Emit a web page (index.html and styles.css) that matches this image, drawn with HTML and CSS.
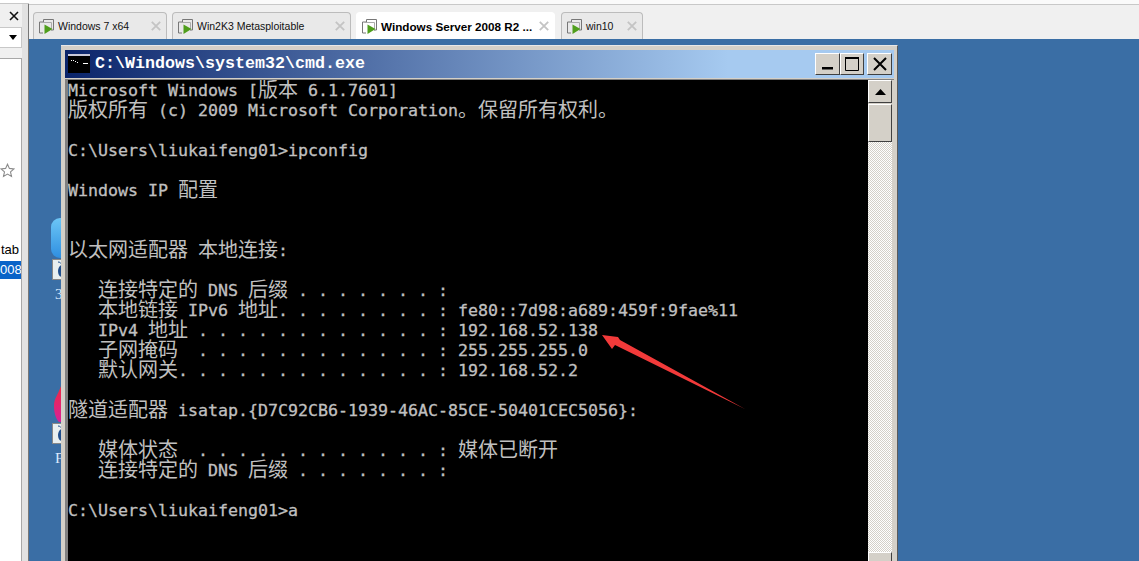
FILE: index.html
```html
<!DOCTYPE html>
<html lang="zh">
<head>
<meta charset="utf-8">
<title>cmd.exe</title>
<link rel="stylesheet" href="styles.css">
</head>
<body>
<div class="app">
  <aside class="side">
    <div class="side-top"></div>
    <div class="side-close"><svg width="10" height="10" viewBox="0 0 10 10"><path d="M1 1l8 8M9 1l-8 8" stroke="#111" stroke-width="1.6" fill="none"/></svg></div>
    <div class="side-select"><svg width="10" height="6" viewBox="0 0 10 6"><path d="M1 0h8L5 5z" fill="#000"/></svg></div>
    <div class="side-list">
      <svg class="star" width="15" height="15" viewBox="0 0 15 15"><path d="M7.500 1.200l1.900 4.200 4.500.5-3.400 3 1 4.500-4-2.300-4 2.300 1-4.500-3.400-3 4.500-.5z" fill="none" stroke="#8c8c8c" stroke-width="1.100"/></svg>
      <div class="item">tab</div>
      <div class="item sel">008</div>
    </div>
  </aside>
  <main class="main">
    <div class="tabs">
      <div class="tab t1"><svg class="vm" width="15" height="15" viewBox="0 0 15 15"><path d="M4.500 3V.5h10V11H12M4.500 3H.5v11H4" fill="none" stroke="#777"/><path d="M2.500 3.500h10V12" fill="none" stroke="#aaa"/><path d="M5.500 5.500l8 4.500-8 5z" fill="#4f9e1c"/></svg><span class="label">Windows 7 x64</span><svg class="x" width="10" height="10" viewBox="0 0 10 10"><path d="M.8.8l8.400 8.400M9.200.8L.8 9.200" stroke="#c4c4c4" stroke-width="1.800"/></svg></div>
      <div class="tab t2"><svg class="vm" width="15" height="15" viewBox="0 0 15 15"><path d="M4.500 3V.5h10V11H12M4.500 3H.5v11H4" fill="none" stroke="#777"/><path d="M2.500 3.500h10V12" fill="none" stroke="#aaa"/><path d="M5.500 5.500l8 4.500-8 5z" fill="#4f9e1c"/></svg><span class="label">Win2K3 Metasploitable</span><svg class="x" width="10" height="10" viewBox="0 0 10 10"><path d="M.8.8l8.400 8.400M9.200.8L.8 9.200" stroke="#c4c4c4" stroke-width="1.800"/></svg></div>
      <div class="tab t3 active"><svg class="vm" width="15" height="15" viewBox="0 0 15 15"><path d="M4.500 3V.5h10V11H12M4.500 3H.5v11H4" fill="none" stroke="#777"/><path d="M2.500 3.500h10V12" fill="none" stroke="#aaa"/><path d="M5.500 5.500l8 4.500-8 5z" fill="#4f9e1c"/></svg><span class="label">Windows Server 2008 R2 ...</span><svg class="x" width="10" height="10" viewBox="0 0 10 10"><path d="M.8.8l8.400 8.400M9.200.8L.8 9.200" stroke="#c4c4c4" stroke-width="1.800"/></svg></div>
      <div class="tab t4"><svg class="vm" width="15" height="15" viewBox="0 0 15 15"><path d="M4.500 3V.5h10V11H12M4.500 3H.5v11H4" fill="none" stroke="#777"/><path d="M2.500 3.500h10V12" fill="none" stroke="#aaa"/><path d="M5.500 5.500l8 4.500-8 5z" fill="#4f9e1c"/></svg><span class="label">win10</span><svg class="x" width="10" height="10" viewBox="0 0 10 10"><path d="M.8.8l8.400 8.400M9.200.8L.8 9.200" stroke="#c4c4c4" stroke-width="1.800"/></svg></div>
    </div>
    <div class="desktop">
      <div class="dicon d1"><div class="art art-blue"></div><div class="short"><svg width="9" height="20" viewBox="0 0 9 20"><path d="M9 5C7 5 5 8 5 11c0 4 2 6 4 6z" fill="#1f4e8c"/><path d="M5 2c2 0 3 1 4 3" stroke="#1f4e8c" fill="none"/></svg></div><div class="cap">3</div></div>
      <div class="dicon d2"><div class="art art-red"><svg width="7" height="36" viewBox="0 0 7 36"><defs><linearGradient id="rg" x1="0" y1="0" x2="0" y2="1"><stop offset="0" stop-color="#f02a40"/><stop offset="1" stop-color="#d8209a"/></linearGradient></defs><path d="M7 0V36H5C2 33 0 27 0 20 0 12 4 9 7 0z" fill="url(#rg)"/></svg></div><div class="short"><svg width="9" height="20" viewBox="0 0 9 20"><path d="M9 5C7 5 5 8 5 11c0 4 2 6 4 6z" fill="#1f4e8c"/><path d="M5 2c2 0 3 1 4 3" stroke="#1f4e8c" fill="none"/></svg></div><div class="cap">F</div></div>

      <section class="window">
        <header class="titlebar">
          <span class="cmdicon"><svg width="22" height="19" viewBox="0 0 22 19"><rect width="22" height="19" fill="#000"/><rect width="22" height="2" fill="#c8c8d8"/><path d="M3 6h1v1H3zM5 6h1v1H5zM7 7h1v1H7zM9 8h1v1H9zM15 9h5v1h-5z" fill="#fff"/></svg></span>
          <span class="title">C:\Windows\system32\cmd.exe</span>
          <span class="wbtn b-min"><svg width="11" height="3" viewBox="0 0 11 3"><rect width="11" height="2.500" fill="#000"/></svg></span>
          <span class="wbtn b-max"><svg width="14" height="14" viewBox="0 0 14 14"><path d="M.5 1.500h13v12H.5z" fill="none" stroke="#000"/><path d="M0 1h14" stroke="#000" stroke-width="2"/></svg></span>
          <span class="wbtn b-close"><svg width="14" height="14" viewBox="0 0 14 14"><path d="M1 1l12 12M13 1L1 13" stroke="#000" stroke-width="2" fill="none"/></svg></span>
        </header>
        <div class="client">
          <div class="console">
            <div class="line">Microsoft Windows [<span class="zh">版本</span> 6.1.7601]</div>
            <div class="line"><span class="zh">版权所有</span> (c) 2009 Microsoft Corporation<span class="zh">。保留所有权利。</span></div>
            <div class="line"></div>
            <div class="line">C:\Users\liukaifeng01&gt;ipconfig</div>
            <div class="line"></div>
            <div class="line">Windows IP <span class="zh">配置</span></div>
            <div class="line"></div>
            <div class="line"></div>
            <div class="line"><span class="zh">以太网适配器</span> <span class="zh">本地连接</span>:</div>
            <div class="line"></div>
            <div class="line">   <span class="zh">连接特定的</span> DNS <span class="zh">后缀</span> . . . . . . . :</div>
            <div class="line">   <span class="zh">本地链接</span> IPv6 <span class="zh">地址</span>. . . . . . . . : fe80::7d98:a689:459f:9fae%11</div>
            <div class="line">   IPv4 <span class="zh">地址</span> . . . . . . . . . . . . : 192.168.52.138</div>
            <div class="line">   <span class="zh">子网掩码</span>  . . . . . . . . . . . . : 255.255.255.0</div>
            <div class="line">   <span class="zh">默认网关</span>. . . . . . . . . . . . . : 192.168.52.2</div>
            <div class="line"></div>
            <div class="line"><span class="zh">隧道适配器</span> isatap.{D7C92CB6-1939-46AC-85CE-50401CEC5056}:</div>
            <div class="line"></div>
            <div class="line">   <span class="zh">媒体状态</span>  . . . . . . . . . . . . : <span class="zh">媒体已断开</span></div>
            <div class="line">   <span class="zh">连接特定的</span> DNS <span class="zh">后缀</span> . . . . . . . :</div>
            <div class="line"></div>
            <div class="line">C:\Users\liukaifeng01&gt;a</div>
          </div>
          <div class="scroll">
            <div class="sbtn"><svg width="11" height="6" viewBox="0 0 11 6"><path d="M5.500 0L11 6H0z" fill="#000"/></svg></div>
            <div class="thumb"></div>
            <div class="track"></div>
            <div class="sbtn"></div>
          </div>
        </div>
      </section>

      <svg class="arrow" width="150" height="80" viewBox="0 0 150 80"><path d="M2 1L18 3L20 6L145 75L15 11L12 15z" fill="#f23a3a"/></svg>
    </div>
  </main>
</div>
</body>
</html>
```
FILE: styles.css
```css
* { box-sizing: border-box; }
html, body { margin: 0; padding: 0; height: 100%; overflow: hidden; background: #3a6ea5; }
.app { display: flex; width: 1139px; height: 561px; overflow: hidden; }

/* left host panel */
.side { width: 29px; flex: none; display: flex; flex-direction: column; background: #f0f0f0; border-right: 1px solid #777; padding-right: 6px; box-shadow: inset -6px 0 0 #e2e2e2; }
.side-top { height: 4px; border-bottom: 1px solid #c8c8c8; background: #fff; margin-right: -7px; }
.side-close { height: 23px; display: flex; align-items: center; justify-content: flex-end; padding: 0 3px 0 0; background: #f0f0f0; width: 22px; }
.side-select { height: 21px; width: 22px; background: #fff; border: 1px solid #c8c8c8; border-left: 0; display: flex; align-items: center; justify-content: flex-end; padding-right: 3px; }
.side-list { margin-top: 10px; width: 22px; flex: 1; background: #fff; border: 1px solid #a8a8a8; border-width: 1px 1px 0 0; padding-top: 104px; font: 13px/18px "Liberation Sans", sans-serif; color: #000; }
.star { display: block; margin: 0 0 63px 0; }
.item { text-align: right; padding-right: 2px; height: 18px; overflow: hidden; }
.item.sel { background: #0a64c8; color: #fff; margin-top: 2px; height: 18px; padding-right: 1px; }

/* main */
.main { flex: 1; display: flex; flex-direction: column; min-width: 0; }
.tabs { height: 39px; flex: none; display: flex; align-items: flex-end; background: #f0f0f0; border-top: 4px solid #fafafa; box-shadow: inset 0 1px 0 #c8c8c8; padding-left: 4px; gap: 5px; }
.tab { height: 27px; display: flex; align-items: center; background: #e9e9e9; border: 1px solid #bcbcbc; border-bottom: 0; border-radius: 4px 4px 0 0; padding: 0 5px 0 5px; font: 10.5px "Liberation Sans", sans-serif; color: #111; }
.tab .label { flex: 1; padding-left: 4px; white-space: nowrap; overflow: hidden; }
.tab .vm { flex: none; }
.tab .x { flex: none; }
.t1 { width: 134px; }
.t2 { width: 179px; }
.t3 { width: 199px; margin-right: 1px; }
.t4 { width: 82px; }
.active { background: #fff; border-color: #fff; font-weight: 700; font-size: 11.7px; color: #000; }

/* desktop */
.desktop { flex: 1; position: relative; background: #3a6ea5; }
.dicon { position: absolute; left: 22px; width: 10px; overflow: hidden; font: 15px "Liberation Serif", serif; color: #dbeaff; }
.d1 { top: 179px; }
.d2 { top: 347px; }
.art { height: 40px; line-height: 0; }
.art-blue { width: 20px; background: linear-gradient(#6cc6f6, #2f8fe0); border-radius: 9px 0 0 9px; }
.art-red { height: 36px; margin-left: 3px; }
.short { height: 21px; margin-top: 1px; margin-left: 1px; background: #e8eff0; border: 1px solid #888; border-right: 0; line-height: 0; }
.cap { padding-left: 4px; line-height: 18px; margin-top: 5px; }

/* cmd window */
.window { position: absolute; left: 32px; top: 6px; width: 837px; height: 530px; background: #d4d0c8; border-right: 1px solid #5a5a5a; border-top: 1px solid #e8e8e8; padding: 4px 3px 0 4px; display: flex; flex-direction: column; }
.titlebar { height: 28px; flex: none; display: flex; align-items: center; background: linear-gradient(90deg, #0a246a 0%, #a6caf0 80%, #a6caf0 100%); padding: 0 2px 1px 3px; }
.cmdicon { width: 22px; height: 19px; flex: none; line-height: 0; }
.title { flex: 1; margin-left: 5px; font: 700 16.67px "Liberation Mono", monospace; color: #fff; white-space: pre; }
.wbtn { width: 25px; height: 22px; flex: none; display: flex; align-items: center; justify-content: center; background: #d4d0c8; border: 1px solid; border-color: #fff #404040 #404040 #fff; }
.b-min svg { margin-top: 10px; margin-right: 1px; }
.b-max { width: 24px; }
.b-close { margin-left: 3px; }

.client { flex: 1; display: flex; margin-top: 1px; border-top: 1px solid #808080; border-left: 3px solid #808080; min-height: 0; }
.console { width: 800px; flex: none; background: #000; color: #c0c0c0; font: 400 16.61px/20px "DejaVu Sans Mono", monospace; -webkit-text-stroke: 0.3px #c0c0c0; padding-top: 1px; overflow: hidden; }
.line { height: 20px; white-space: pre; }
.zh { font: 400 20px/0 "Noto Sans CJK SC", sans-serif; -webkit-text-stroke: 0; vertical-align: -1px; }
.scroll { width: 24px; flex: none; display: flex; flex-direction: column; background: #d4d0c8; }
.sbtn { height: 23px; flex: none; display: flex; align-items: center; justify-content: center; background: #d4d0c8; border: 1px solid; border-color: #fff #404040 #404040 #fff; }
.thumb { height: 38px; flex: none; margin-top: 1px; background: #d4d0c8; border: 1px solid; border-color: #fff #404040 #404040 #fff; }
.track { flex: 1; background: repeating-conic-gradient(#fff 0 25%, #d4d0c8 0 50%) 0 0 / 2px 2px; }

.arrow { position: absolute; left: 571px; top: 295px; }
```
